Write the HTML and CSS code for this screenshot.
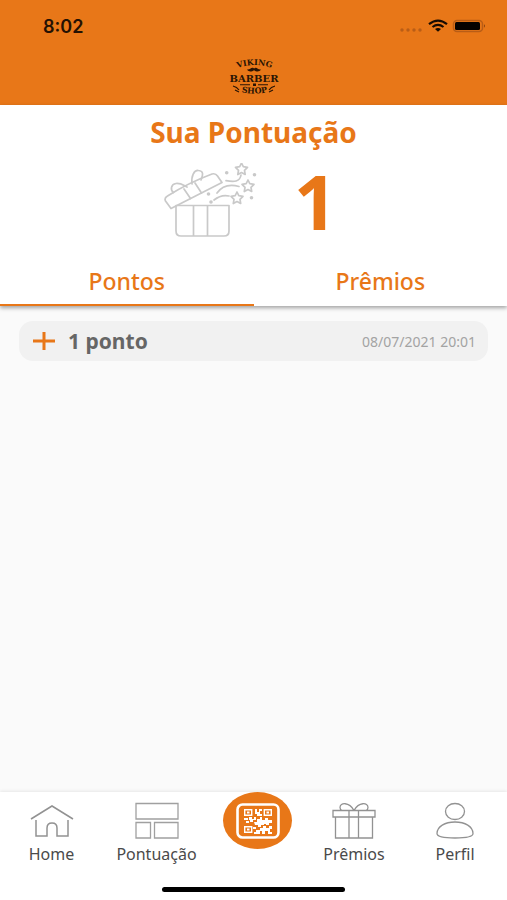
FILE: index.html
```html
<!DOCTYPE html>
<html lang="pt-BR">
<head>
<meta charset="utf-8">
<meta name="viewport" content="width=device-width, initial-scale=1">
<title>Sua Pontuação</title>
<link rel="stylesheet" href="styles.css">
</head>
<body>
<div class="app">
  <header class="header">
    <div class="status">
      <span class="clock">8:02</span>
      <svg class="status-icons" width="88" height="16" viewBox="0 0 88 16" aria-hidden="true">
        <g fill="#b95d16"><circle cx="4" cy="12" r="1.700"/><circle cx="10" cy="12" r="1.700"/><circle cx="16" cy="12" r="1.700"/><circle cx="22" cy="12" r="1.700"/></g>
        <g fill="none" stroke="#160b02" stroke-width="2.200"><path d="M31 6.200Q40 -1 49 6.200"/><path d="M34.500 9Q40 4.600 45.500 9"/></g>
        <path d="M37 11Q40 8.800 43 11L40 13.800Z" fill="#160b02"/>
        <rect x="55.500" y="2.500" width="29" height="11" rx="3.500" fill="none" stroke="#b95d16" stroke-width="1.500"/>
        <rect x="57" y="4" width="25" height="8" rx="1.500" fill="#050200"/>
        <path d="M86 6.300Q88 8 86 9.700Z" fill="#8a4410"/>
      </svg>
    </div>
    <svg class="logo" width="50" height="40" viewBox="0 0 50 40" role="img" aria-label="Viking Barber Shop">
      <defs><path id="arc-top" d="M4 13Q25 3 47 13"/><path id="arc-bottom" d="M8 34Q25 39 43 34"/></defs>
      <g fill="#2a1404">
        <text class="logo-arc"><textPath href="#arc-top" startOffset="50%" text-anchor="middle">VIKING</textPath></text>
        <path d="M18 12.500C21 13 22 10 24.500 11L25 11.500L26 11C28 10 29 13 32 12.500C30 15.500 27 14.500 25 13.200C23 14.500 20 15.500 18 12.500Z"/>
        <text class="logo-main" x="25" y="25" text-anchor="middle">BARBER</text>
        <path d="M11 27.300h10v1H11zM29 27.300h10v1H29zM24 26.500h3v2.500h-3z"/>
        <text class="logo-small"><textPath href="#arc-bottom" startOffset="50%" text-anchor="middle">SHOP</textPath></text>
      </g>
      <path d="M4 29q4 1 6 4M6 33l4 2M46 29q-4 1-6 4M44 33l-4 2" stroke="#2a1404" stroke-width="1.200" fill="none"/>
    </svg>
  </header>

  <section class="summary">
    <h1 class="title">Sua Pontuação</h1>
    <div class="score">
      <svg width="94" height="76" viewBox="0 0 94 76" fill="none" stroke="#c9c9c9" stroke-width="1.700" stroke-linejoin="round" stroke-linecap="round" aria-hidden="true">
        <path d="M12 42.500H65V68Q65 73 60 73H17Q12 73 12 68ZM29.500 42.500V73M43.500 42.500V73"/>
        <path d="M7 45.500L1.500 38Q0 35 3.500 33Q24 20 48 11Q51.500 10 53.500 13L58 19.500Z"/>
        <path d="M20 26L26.500 35.500M31 20L37.500 30"/>
        <path d="M9.500 29.500C6 27 7 21 12 20.500C17 20 19 22 23 24M28 21C27 13 30 7 34.500 7.500C41 8 38 14 37 17"/>
        <path d="M62 17.700C70 19 76 19 77 12M53 30C58 23 66 21 75 23.500M50 37C55 33 59 31.500 65 33"/>
        <path id="star" d="M77.500 0l1.800 3.700 4.200.6-3 3 .7 4.200-3.700-2-3.700 2 .7-4.200-3-3 4.200-.6Z"/>
        <use href="#star" x="6.500" y="17"/>
        <use href="#star" x="-4.500" y="29"/>
        <g fill="#c9c9c9" stroke="none"><circle cx="62.700" cy="9.700" r="1.800"/><circle cx="90.500" cy="11.700" r="1.800"/><circle cx="44.500" cy="31" r="1.800"/><circle cx="87.500" cy="34.700" r="1.800"/><circle cx="47" cy="39" r="1.800"/></g>
      </svg>
      <strong class="points">1</strong>
    </div>
    <div class="tabs" role="tablist">
      <button class="tab active" type="button" role="tab" aria-selected="true">Pontos</button>
      <button class="tab" type="button" role="tab" aria-selected="false">Prêmios</button>
    </div>
  </section>

  <main class="content">
    <ul class="history">
      <li class="entry">
        <svg width="24" height="20" viewBox="0 0 24 20" aria-hidden="true"><path d="M1 10H23M12 1V19" stroke="#e87718" stroke-width="3"/></svg>
        <span class="entry-name">1 ponto</span>
        <time class="entry-date" datetime="2021-07-08T20:01">08/07/2021 20:01</time>
      </li>
    </ul>
  </main>

  <nav class="nav">
    <a class="nav-item" href="#home">
      <svg width="44" height="38" viewBox="0 0 44 38" fill="none" stroke="#929292" stroke-width="1.500" aria-hidden="true"><path d="M1 17L22 4L43 17M6 18V34H17V26Q17 21 22 21Q27 21 27 26V34H38V18"/></svg>
      <span>Home</span>
    </a>
    <a class="nav-item" href="#pontuacao">
      <svg width="44" height="38" viewBox="0 0 44 38" fill="none" stroke="#a0a0a0" stroke-width="1.300" aria-hidden="true"><path d="M1 1.500H43V17H1ZM1 20.500H15.500V36H1ZM19.500 20.500H43V36H19.500Z"/></svg>
      <span>Pontuação</span>
    </a>
    <a class="scan" href="#scan" aria-label="Ler QR code">
      <svg width="44" height="36" viewBox="0 0 44 36" aria-hidden="true">
        <rect x="1.500" y="1.500" width="41" height="33" rx="5" fill="none" stroke="#fff" stroke-width="2.600"/>
        <g fill="none" stroke="#fff" stroke-width="1.400"><path d="M8.700 6.700h7v5.600h-7zM28.300 6.700h7v5.600h-7zM8.700 23.700h7v5.600h-7z"/></g>
        <path fill="#fff" d="M11 8.500h2.500v2H11zM30.500 8.500H33v2h-2.500zM11 25.500h2.500v2H11zM19 6h2v3h-2zM23 6h3v2h-2v3h2v2h-5v-2h-2v-2h4zM8 15h4v2H8zM13 14h3v2h2v-2h2v3h-3v2h-3v-2h-1zM10 18h3v2h-3zM18 19h3v-3h3v-2h2v3h3v-2h3v2h4v3h-3v2h-3v-2h-2v2h-3v2h-3v-2h-3zM17 24h3v2h-3zM20 27h4v-2h3v-2h3v2h3v-2h3v3h-2v3h2v2h-4v-3h-3v3h-3v-3h-2v3h-6v-2h2zM28 19h2v2h-2z"/>
      </svg>
    </a>
    <a class="nav-item" href="#premios">
      <svg width="44" height="38" viewBox="0 0 44 38" fill="none" stroke="#929292" stroke-width="1.300" aria-hidden="true"><path d="M1 8.500H43V15H1ZM3.500 15V36H40.500V15M17 8.500V36M26.500 8.500V36M22 8.500C17 -.5 8 .5 8 5.500Q8 7.500 10 8.500M22 8.500C27 -.5 36 .5 36 5.500Q36 7.500 34 8.500"/></svg>
      <span>Prêmios</span>
    </a>
    <a class="nav-item" href="#perfil">
      <svg width="44" height="38" viewBox="0 0 44 38" fill="none" stroke="#929292" stroke-width="1.300" aria-hidden="true"><ellipse cx="22" cy="9.500" rx="9.500" ry="8"/><path d="M4 31.500C4 24.500 12 20 22 20S40 24.500 40 31.500C40 34.500 34 36 22 36S4 34.500 4 31.500Z"/></svg>
      <span>Perfil</span>
    </a>
  </nav>
  <div class="home-bar"></div>
</div>
</body>
</html>
```
FILE: styles.css
```css
* {
  box-sizing: border-box;
}

body {
  margin: 0;
  background: #fafafa;
  color: #4a4a4a;
  font-family: "Noto Sans", "Open Sans", sans-serif;
}

.app {
  display: flex;
  flex-direction: column;
  min-height: 100vh;
}

.header {
  background: #e87718;
  padding: 16px 0 8px;
}

.status {
  display: flex;
  align-items: center;
  justify-content: space-between;
  height: 20px;
  padding: 0 21px 0 43px;
}

.clock {
  color: #241103;
  font-family: Inter, sans-serif;
  font-size: 18px;
  font-weight: 600;
}

.logo {
  display: block;
  margin: 21px auto 0;
}

.logo-arc,
.logo-main,
.logo-small {
  font-family: "DejaVu Serif", serif;
  font-weight: 700;
}

.logo-arc {
  font-size: 8px;
}

.logo-main {
  font-size: 10px;
}

.logo-small {
  font-size: 8px;
}

.summary {
  position: relative;
  background: #fff;
  box-shadow: 0 2px 4px rgba(0, 0, 0, 0.35);
}

.title {
  margin: 0;
  padding-top: 7px;
  color: #e87718;
  font-size: 28px;
  font-weight: 700;
  line-height: 40px;
  text-align: center;
}

.score {
  display: flex;
  justify-content: center;
  gap: 36px;
  height: 105px;
  padding: 11px 6px 0 0;
}

.points {
  color: #e87718;
  font-size: 76px;
  line-height: 76px;
}

.tabs {
  display: grid;
  grid-template-columns: 1fr 1fr;
}

.tab {
  height: 49px;
  padding: 0;
  border: 0;
  border-bottom: 2px solid transparent;
  background: none;
  color: #e87718;
  font: 500 23px/44px "Noto Sans", "Open Sans", sans-serif;
}

.tab.active {
  border-bottom-color: #e87718;
}

.content {
  flex: 1;
  padding: 15px 19px;
}

.history {
  margin: 0;
  padding: 0;
  list-style: none;
}

.entry {
  display: flex;
  align-items: center;
  height: 40px;
  padding: 0 12px 0 13px;
  border-radius: 14px;
  background: #f1f1f1;
}

.entry-name {
  margin-left: 12px;
  color: #666;
  font-size: 21px;
  font-weight: 700;
}

.entry-date {
  margin-left: auto;
  color: #a3a3a3;
  font-size: 14px;
}

.nav {
  display: grid;
  grid-template-columns: 103fr 107fr 95fr 98fr 104fr;
  height: 88px;
  background: #fff;
  box-shadow: 0 -1px 3px rgba(0, 0, 0, 0.08);
}

.nav-item {
  display: flex;
  flex-direction: column;
  align-items: center;
  padding-top: 10px;
  color: #4a4a4a;
  font-size: 16px;
  line-height: 28px;
  text-decoration: none;
}

.scan {
  display: grid;
  place-items: center;
  justify-self: center;
  width: 69px;
  height: 57px;
  border-radius: 50%;
  background: #e87718;
}

.home-bar {
  height: 20px;
  background: #fff;
}

.home-bar::before {
  content: "";
  display: block;
  width: 36%;
  height: 5px;
  margin: 0 auto;
  transform: translateY(7px);
  border-radius: 3px;
  background: #000;
}
```
